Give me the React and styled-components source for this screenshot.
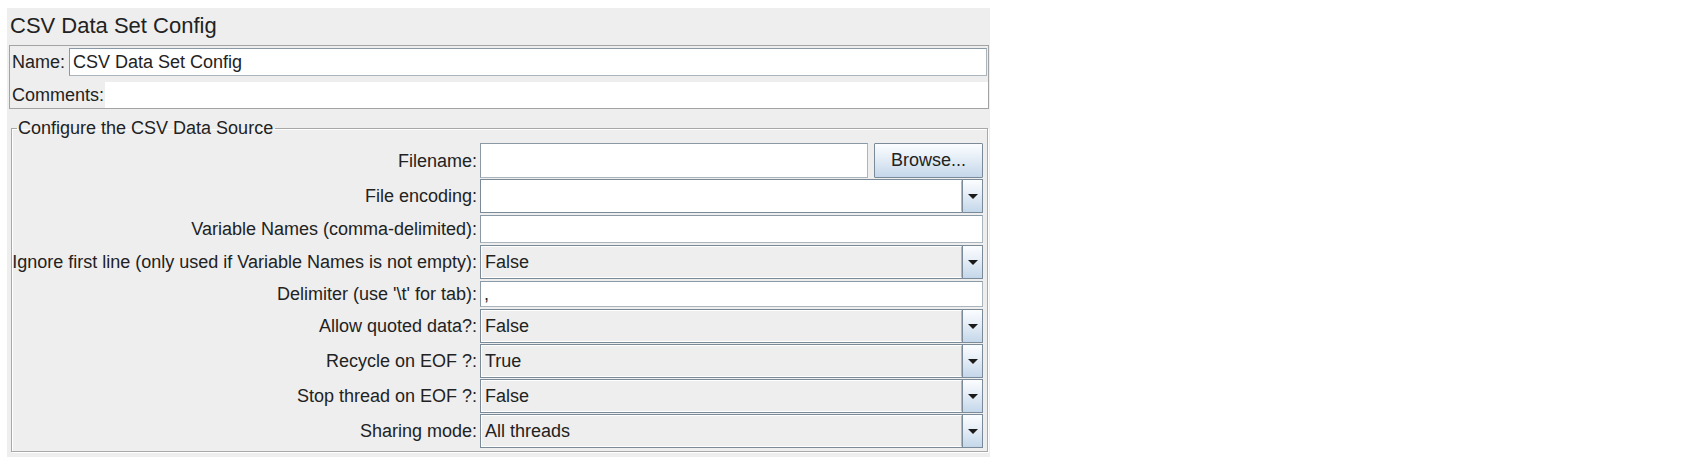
import React from "react";
import styled, { createGlobalStyle } from "styled-components";

const GlobalStyle = createGlobalStyle`
  body {
    margin: 0;
    background: #ffffff;
    font-family: "Liberation Sans", Arial, sans-serif;
    color: #222222;
  }
`;

const Page = styled.div`
  padding: 8px 0 0 7px;
`;

const Panel = styled.div`
  width: 983px;
  background: #eeeeee;
  padding-bottom: 5px;
  display: flex;
  flex-direction: column;
`;

const Title = styled.div`
  font-size: 22px;
  line-height: 35px;
  height: 35px;
  padding: 0 0 2px 3px;
  color: #222;
`;

const NameBox = styled.div`
  margin: 0 1px 0 2px;
  border: 1px solid #a3a3a3;
  height: 62px;
  display: flex;
  flex-direction: column;
`;

const NameRow = styled.div`
  display: flex;
  align-items: center;
  padding: 2px 1px 0 2px;
  gap: 4px;
  font-size: 18px;
`;

const CommentsRow = styled.div`
  display: flex;
  align-items: stretch;
  margin-top: 6px;
  padding-left: 2px;
  height: 26px;
  font-size: 18px;
  span {
    display: flex;
    align-items: center;
    padding-right: 1px;
  }
`;

const TextInput = styled.div`
  flex: 1;
  box-sizing: border-box;
  height: ${({ $h }) => $h || 28}px;
  background: #ffffff;
  border: 1px solid #8a99a6;
  border-right-color: #aab4bd;
  border-bottom-color: #aab4bd;
  box-shadow: inset 1px 1px 0 #ffffff;
  display: flex;
  align-items: center;
  padding-left: 3px;
  font-size: 18px;
  white-space: nowrap;
`;

const CommentArea = styled.div`
  flex: 1;
  background: #ffffff;
`;

const Group = styled.fieldset`
  margin: 10px 2px 0 4px;
  padding: 6px 4px 3px 0;
  border: 1px solid #a8a8a8;
  box-shadow: inset 1px 1px 0 #ffffff, 1px 1px 0 #ffffff;
  min-width: 0;
`;

const Legend = styled.legend`
  font-size: 18px;
  line-height: 18px;
  padding: 0 2px 0 1px;
  margin-left: 5px;
  color: #222;
`;

const FormGrid = styled.div`
  display: grid;
  grid-template-columns: 465px 503px;
  column-gap: 3px;
  row-gap: 1px;
  align-items: center;
`;

const Label = styled.div`
  text-align: right;
  white-space: nowrap;
  font-size: 18px;
  line-height: 20px;
  color: #222;
`;

const Cell = styled.div`
  display: flex;
  gap: 6px;
  align-items: stretch;
  padding: ${({ $pad }) => $pad || 0}px 0;
`;

const Button = styled.div`
  box-sizing: border-box;
  width: 109px;
  height: 35px;
  border: 1px solid #7a8a99;
  border-radius: 1px;
  background: linear-gradient(#fbfdff 0%, #e4edf6 45%, #c4d7ea 100%);
  display: flex;
  align-items: center;
  justify-content: center;
  font-size: 18px;
  color: #222;
`;

const Combo = styled.div`
  box-sizing: border-box;
  flex: 1;
  height: 34px;
  display: flex;
  border: 1px solid #7a8a99;
  background: ${({ $editable }) => ($editable ? "#ffffff" : "#eeeeee")};
`;

const ComboValue = styled.div`
  flex: 1;
  display: flex;
  align-items: center;
  padding-left: 3px;
  font-size: 18px;
  color: #222;
  border: 1px solid #ffffff;
  border-right: 1px solid #a8b8c8;
`;

const ArrowButton = styled.div`
  width: 19px;
  display: flex;
  align-items: center;
  justify-content: center;
  background: linear-gradient(#fbfdff 0%, #e8eff7 40%, #c4d7ea 100%);
  border-left: 1px solid #7a8a99;
`;

const Arrow = () => (
  <svg width="10" height="5" viewBox="0 0 10 5">
    <polygon points="0,0 10,0 5,5" fill="#1a1a1a" />
  </svg>
);

const ComboBox = ({ value, editable }) => (
  <Combo $editable={editable}>
    <ComboValue>{value}</ComboValue>
    <ArrowButton>
      <Arrow />
    </ArrowButton>
  </Combo>
);

const App = () => {
  return (
    <>
      <GlobalStyle />
      <Page>
        <Panel>
          <Title>CSV Data Set Config</Title>
          <NameBox>
            <NameRow>
              <span>Name:</span>
              <TextInput>CSV Data Set Config</TextInput>
            </NameRow>
            <CommentsRow>
              <span>Comments:</span>
              <CommentArea />
            </CommentsRow>
          </NameBox>
          <Group>
            <Legend>Configure the CSV Data Source</Legend>
            <FormGrid>
              <Label>Filename:</Label>
              <Cell>
                <TextInput $h={35} />
                <Button>Browse...</Button>
              </Cell>

              <Label>File encoding:</Label>
              <Cell>
                <ComboBox value="" editable />
              </Cell>

              <Label>Variable Names (comma-delimited):</Label>
              <Cell $pad={1}>
                <TextInput />
              </Cell>

              <Label>Ignore first line (only used if Variable Names is not empty):</Label>
              <Cell>
                <ComboBox value="False" />
              </Cell>

              <Label>Delimiter (use '\t' for tab):</Label>
              <Cell $pad={1}>
                <TextInput $h={26}>,</TextInput>
              </Cell>

              <Label>Allow quoted data?:</Label>
              <Cell>
                <ComboBox value="False" />
              </Cell>

              <Label>Recycle on EOF ?:</Label>
              <Cell>
                <ComboBox value="True" />
              </Cell>

              <Label>Stop thread on EOF ?:</Label>
              <Cell>
                <ComboBox value="False" />
              </Cell>

              <Label>Sharing mode:</Label>
              <Cell>
                <ComboBox value="All threads" />
              </Cell>
            </FormGrid>
          </Group>
        </Panel>
      </Page>
    </>
  );
};

export default App;
